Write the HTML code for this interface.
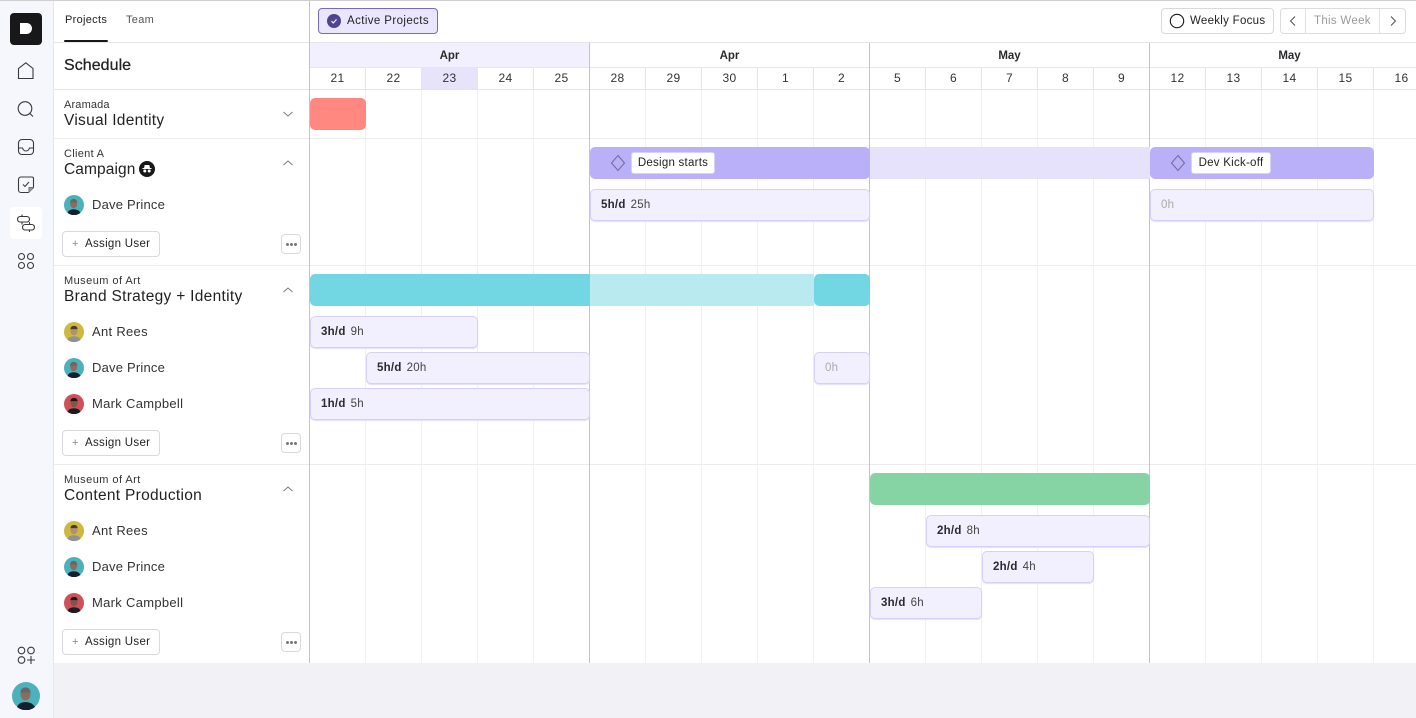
<!DOCTYPE html>
<html><head><meta charset="utf-8"><style>
html,body{margin:0;padding:0}
body{width:1416px;height:718px;overflow:hidden;background:#fff;position:relative;font-family:"Liberation Sans",sans-serif;color:#222}
div,span.a,svg.a{position:absolute}
.t{position:absolute;white-space:nowrap;line-height:16px;height:16px;margin-top:1px}
.h{left:0;height:1px;background:#ececef}
.v{width:1px;background:#f0f0f3;top:90px;height:573px}
.s{width:1px;background:#c4c4c6;top:43px;height:620px}
.dv{width:1px;background:#e5e5ea;top:68px;height:21px}
.d{top:70px;width:55px;text-align:center;font-size:12px;line-height:16px;color:#333;letter-spacing:.3px}
.m{top:48px;width:279px;text-align:center;font-size:11.5px;font-weight:bold;line-height:16px;color:#2a2a2e}
.c{left:64px;font-size:11px;letter-spacing:.3px;color:#333}
.mu{letter-spacing:.45px}
.n{left:64px;font-size:15.5px;letter-spacing:.25px;color:#222}
.u{left:92px;font-size:13px;letter-spacing:.3px;color:#333}
.dp{letter-spacing:.2px}
.b{height:32px;box-sizing:border-box;background:#f2f0fe;border:1px solid #d6d0f8;border-radius:5px;box-shadow:0 1px 1px #e2def8;font-size:11.5px;line-height:30px;padding-left:10px;color:#444;white-space:nowrap;letter-spacing:.25px}
.b b{color:#2a2a30;margin-right:5px}
.z{color:#aaa;padding-left:10px}
.as{left:62px;width:98px;height:26px;box-sizing:border-box;border:1px solid #d9d9dc;border-radius:4px;background:#fff;font-size:11.5px;line-height:24px;padding-left:22px;color:#222;letter-spacing:.3px;white-space:nowrap}
.as i{position:absolute;left:9px;top:0;font-style:normal;color:#888;font-size:11px}
.mo{left:281px;width:20px;height:20px;box-sizing:border-box;border:1px solid #d9d9dc;border-radius:4px;background:#fff}
.mo i{position:absolute;top:8px;width:3px;height:3px;border-radius:50%;background:#777}
.lab{height:22px;box-sizing:border-box;background:#fff;border:1px solid #d8d2fa;border-radius:3px;font-size:11.5px;line-height:21px;text-align:center;color:#222;letter-spacing:.25px;white-space:nowrap}
.ic{position:absolute;fill:none;stroke:#3a3a3e;stroke-width:1.1}
</style></head><body>
<div style="left:0;top:0;width:1416px;height:1px;background:#cfcfd2"></div>
<!-- sidebar -->
<div style="left:0;top:1px;width:53px;height:717px;background:#f5f7fc;border-right:1px solid #e6e6ec"></div>
<div style="left:10px;top:13px;width:32px;height:32px;background:#18181a;border-radius:4px"></div>
<svg class="a" style="left:10px;top:13px" width="32" height="32"><path d="M10 10h6.500a5.500 5.500 0 0 1 0 11H10z" fill="#fff"/></svg>
<svg class="ic" style="left:16px;top:60px" width="22" height="22"><path d="M2.500 18.500V8.500L9.800 2.800l7.200 5.700v10z"/></svg>
<svg class="ic" style="left:16px;top:98px" width="22" height="22"><circle cx="9" cy="10.500" r="6.800"/><path d="M14 15.500l3 3"/></svg>
<svg class="ic" style="left:16px;top:137px" width="22" height="22"><rect x="2.500" y="2.500" width="15" height="15" rx="3.500"/><path d="M2.500 11H6.500q1 3 3.500 3t3.500-3h4"/></svg>
<svg class="ic" style="left:16px;top:174px" width="22" height="22"><path d="M12.500 18.500H5a2.500 2.500 0 0 1-2.500-2.500V5.500A2.500 2.500 0 0 1 5 3h11a1.500 1.500 0 0 1 1.500 1.500V13.500z"/><path d="M7 10.500l2 2 4-4.500"/><path d="M13 18.500v-5h4.500" fill="#999" stroke="#777"/></svg>
<div style="left:10px;top:207px;width:32px;height:32px;background:#fff;border-radius:4px"></div>
<svg class="ic" style="left:15px;top:212px" width="24" height="24"><rect x="2.500" y="4.500" width="12" height="5.500" rx="2.700"/><rect x="7.500" y="12.500" width="12" height="5.500" rx="2.700"/><path d="M7 2.500v2M7 10v2.500M14.500 10v2.500M14.500 18v2"/></svg>
<svg class="ic" style="left:16px;top:251px" width="22" height="22"><circle cx="5.500" cy="5.500" r="3"/><circle cx="14.500" cy="5.500" r="3"/><circle cx="5.500" cy="14.500" r="3"/><circle cx="14.500" cy="14.500" r="3"/></svg>
<svg class="ic" style="left:16px;top:645px" width="22" height="22"><circle cx="5.500" cy="5.500" r="3.300"/><circle cx="15" cy="5.500" r="3.300"/><circle cx="5.500" cy="15" r="3.300"/><path d="M11 15h8M15 11v8"/></svg>
<svg class="a" style="left:12px;top:682px" width="28" height="28" viewBox="0 0 28 28"><circle cx="14" cy="14" r="14" fill="#4ab1bd"/><ellipse cx="13.500" cy="12" rx="5" ry="6.500" fill="#8a6d5c"/><path d="M13.500 5.500c-3 0-5 2-5 5h10c0-3-2-5-5-5z" fill="#6b6660"/><path d="M5 25q2-5 8.500-5t9.500 5a14 14 0 0 1-18 0z" fill="#15202e"/></svg>

<!-- bottom area -->
<div style="left:54px;top:663px;width:1362px;height:55px;background:#f1f1f6"></div>

<!-- lines -->
<div class="h" style="left:54px;top:42px;width:1362px;background:#e5e5e8"></div>
<div class="h" style="left:54px;top:89px;width:1362px;background:#e5e5e8"></div>
<div class="h" style="left:54px;top:138px;width:1362px"></div>
<div class="h" style="left:54px;top:265px;width:1362px"></div>
<div class="h" style="left:54px;top:464px;width:1362px"></div>
<div style="left:309px;top:1px;width:1px;height:662px;background:#c4c4c6"></div>

<!-- month band -->
<div style="left:310px;top:43px;width:279px;height:24px;background:#f2f0fe"></div>
<div class="h" style="left:310px;top:67px;width:1106px;background:#e5e5ea"></div>
<div style="left:422px;top:68px;width:55px;height:21px;background:#e6e3fb"></div>

<div class="v" style="left:365px"></div><div class="v" style="left:421px"></div><div class="v" style="left:477px"></div><div class="v" style="left:533px"></div>
<div class="v" style="left:645px"></div><div class="v" style="left:701px"></div><div class="v" style="left:757px"></div><div class="v" style="left:813px"></div>
<div class="v" style="left:925px"></div><div class="v" style="left:981px"></div><div class="v" style="left:1037px"></div><div class="v" style="left:1093px"></div>
<div class="v" style="left:1205px"></div><div class="v" style="left:1261px"></div><div class="v" style="left:1317px"></div><div class="v" style="left:1373px"></div>
<div class="dv" style="left:365px"></div><div class="dv" style="left:421px"></div><div class="dv" style="left:477px"></div><div class="dv" style="left:533px"></div>
<div class="dv" style="left:645px"></div><div class="dv" style="left:701px"></div><div class="dv" style="left:757px"></div><div class="dv" style="left:813px"></div>
<div class="dv" style="left:925px"></div><div class="dv" style="left:981px"></div><div class="dv" style="left:1037px"></div><div class="dv" style="left:1093px"></div>
<div class="dv" style="left:1205px"></div><div class="dv" style="left:1261px"></div><div class="dv" style="left:1317px"></div><div class="dv" style="left:1373px"></div>
<div class="s" style="left:589px"></div><div class="s" style="left:869px"></div><div class="s" style="left:1149px"></div>

<div class="m" style="left:310px">Apr</div><div class="m" style="left:590px">Apr</div><div class="m" style="left:870px">May</div><div class="m" style="left:1150px">May</div>
<div class="d" style="left:310px">21</div><div class="d" style="left:366px">22</div><div class="d" style="left:422px">23</div><div class="d" style="left:478px">24</div><div class="d" style="left:534px">25</div>
<div class="d" style="left:590px">28</div><div class="d" style="left:646px">29</div><div class="d" style="left:702px">30</div><div class="d" style="left:758px">1</div><div class="d" style="left:814px">2</div>
<div class="d" style="left:870px">5</div><div class="d" style="left:926px">6</div><div class="d" style="left:982px">7</div><div class="d" style="left:1038px">8</div><div class="d" style="left:1094px">9</div>
<div class="d" style="left:1150px">12</div><div class="d" style="left:1206px">13</div><div class="d" style="left:1262px">14</div><div class="d" style="left:1318px">15</div><div class="d" style="left:1374px">16</div>

<!-- tabs -->
<div class="t" style="left:65px;top:11px;font-size:11px;letter-spacing:.3px;color:#222">Projects</div>
<div class="t" style="left:126px;top:11px;font-size:11px;letter-spacing:.3px;color:#555">Team</div>
<div style="left:64px;top:40px;width:44px;height:2px;background:#18181a;border-radius:1px"></div>
<div class="t" style="left:64px;top:57px;font-size:16px;letter-spacing:.05px;color:#222;-webkit-text-stroke:.25px #222">Schedule</div>

<!-- toolbar -->
<div style="left:318px;top:8px;width:120px;height:26px;box-sizing:border-box;background:#e9e6fd;border:1px solid #7a68c8;border-radius:4px"></div>
<svg class="a" style="left:327px;top:14px" width="14" height="14"><circle cx="7" cy="7" r="7" fill="#51438f"/><path d="M4.500 7.200l1.800 1.800 3.200-3.600" fill="none" stroke="#fff" stroke-width="1.100"/></svg>
<div class="t" style="left:347px;top:12px;font-size:11.500px;letter-spacing:.4px;color:#222">Active Projects</div>

<div style="left:1161px;top:8px;width:113px;height:26px;box-sizing:border-box;border:1px solid #d9d9dc;border-radius:4px;background:#fff"></div>
<svg class="a" style="left:1169px;top:13px" width="16" height="16"><circle cx="8" cy="8" r="6.700" fill="none" stroke="#18181a" stroke-width="1.100"/></svg>
<div class="t" style="left:1190px;top:12px;font-size:11.500px;letter-spacing:.28px;color:#222">Weekly Focus</div>
<div style="left:1280px;top:8px;width:126px;height:26px;box-sizing:border-box;border:1px solid #dcdcdf;border-radius:4px;background:#fff"></div>
<div style="left:1305px;top:9px;width:1px;height:24px;background:#e2e2e5"></div>
<div style="left:1379px;top:9px;width:1px;height:24px;background:#e2e2e5"></div>
<svg class="a" style="left:1287px;top:15px" width="12" height="12"><path d="M8 1.500L3.500 6 8 10.500" fill="none" stroke="#444" stroke-width=".9"/></svg>
<svg class="a" style="left:1387px;top:15px" width="12" height="12"><path d="M4 1.500L8.500 6 4 10.500" fill="none" stroke="#444" stroke-width=".9"/></svg>
<div class="t" style="left:1314px;top:12px;font-size:11.500px;letter-spacing:.3px;color:#9a9a9e">This Week</div>

<!-- left rows -->
<div class="t c" style="top:96px;letter-spacing:.15px">Aramada</div><div class="t n" style="top:112px;letter-spacing:.28px">Visual Identity</div>
<svg class="a" style="left:282px;top:108px" width="12" height="12"><path d="M1.500 4L6 8l4.500-4" fill="none" stroke="#777" stroke-width=".9"/></svg>

<div class="t c" style="top:145px">Client A</div><div class="t n" style="top:161px;letter-spacing:.1px">Campaign</div>
<svg class="a" style="left:139px;top:161px" width="16" height="16"><circle cx="8" cy="8" r="8" fill="#18181a"/><path d="M3.500 7.500h9M5.500 7l.6-2.500h3.800l.6 2.500" fill="#fff" stroke="#fff"/><circle cx="5.800" cy="10" r="1.500" fill="#fff"/><circle cx="10.200" cy="10" r="1.500" fill="#fff"/></svg>
<svg class="a" style="left:282px;top:157px" width="12" height="12"><path d="M1.500 8L6 4l4.500 4" fill="none" stroke="#777" stroke-width=".9"/></svg>
<svg class="a" style="left:64px;top:195px" width="20" height="20" viewBox="0 0 28 28"><circle cx="14" cy="14" r="14" fill="#4ab1bd"/><ellipse cx="13.500" cy="12" rx="5" ry="6.500" fill="#8a6d5c"/><path d="M13.500 5.500c-3 0-5 2-5 5h10c0-3-2-5-5-5z" fill="#6b6660"/><path d="M5 25q2-5 8.500-5t9.500 5a14 14 0 0 1-18 0z" fill="#15202e"/></svg>
<div class="t u dp" style="top:196px">Dave Prince</div>
<div class="as" style="top:231px"><i>+</i>Assign User</div>
<div class="mo" style="top:234px"><i style="left:4px"></i><i style="left:8px"></i><i style="left:12px"></i></div>

<div class="t c mu" style="top:272px">Museum of Art</div><div class="t n" style="top:288px;letter-spacing:.3px">Brand Strategy + Identity</div>
<svg class="a" style="left:282px;top:284px" width="12" height="12"><path d="M1.500 8L6 4l4.500 4" fill="none" stroke="#777" stroke-width=".9"/></svg>
<svg class="a" style="left:64px;top:322px" width="20" height="20" viewBox="0 0 28 28"><circle cx="14" cy="14" r="14" fill="#cdb93e"/><ellipse cx="14" cy="12" rx="5" ry="6.500" fill="#b08f74"/><path d="M14 5.500c-3 0-5 2-5 4.500h10c0-2.500-2-4.500-5-4.500z" fill="#4a3a2c"/><path d="M5 25q2-5 9-5t9 5a14 14 0 0 1-18 0z" fill="#8d9296"/></svg>
<div class="t u" style="top:323px">Ant Rees</div>
<svg class="a" style="left:64px;top:358px" width="20" height="20" viewBox="0 0 28 28"><circle cx="14" cy="14" r="14" fill="#4ab1bd"/><ellipse cx="13.500" cy="12" rx="5" ry="6.500" fill="#8a6d5c"/><path d="M13.500 5.500c-3 0-5 2-5 5h10c0-3-2-5-5-5z" fill="#6b6660"/><path d="M5 25q2-5 8.500-5t9.500 5a14 14 0 0 1-18 0z" fill="#15202e"/></svg>
<div class="t u dp" style="top:359px">Dave Prince</div>
<svg class="a" style="left:64px;top:394px" width="20" height="20" viewBox="0 0 28 28"><circle cx="14" cy="14" r="14" fill="#cf5058"/><ellipse cx="14" cy="12" rx="5" ry="6.500" fill="#7d5848"/><path d="M14 5.500c-3 0-5 2-5 4.500h10c0-2.500-2-4.500-5-4.500z" fill="#1c1614"/><path d="M5 25q2-5 9-5t9 5a14 14 0 0 1-18 0z" fill="#1c1c22"/></svg>
<div class="t u" style="top:395px">Mark Campbell</div>
<div class="as" style="top:430px"><i>+</i>Assign User</div>
<div class="mo" style="top:433px"><i style="left:4px"></i><i style="left:8px"></i><i style="left:12px"></i></div>

<div class="t c mu" style="top:471px">Museum of Art</div><div class="t n" style="top:487px;letter-spacing:.3px">Content Production</div>
<svg class="a" style="left:282px;top:483px" width="12" height="12"><path d="M1.500 8L6 4l4.500 4" fill="none" stroke="#777" stroke-width=".9"/></svg>
<svg class="a" style="left:64px;top:521px" width="20" height="20" viewBox="0 0 28 28"><circle cx="14" cy="14" r="14" fill="#cdb93e"/><ellipse cx="14" cy="12" rx="5" ry="6.500" fill="#b08f74"/><path d="M14 5.500c-3 0-5 2-5 4.500h10c0-2.500-2-4.500-5-4.500z" fill="#4a3a2c"/><path d="M5 25q2-5 9-5t9 5a14 14 0 0 1-18 0z" fill="#8d9296"/></svg>
<div class="t u" style="top:522px">Ant Rees</div>
<svg class="a" style="left:64px;top:557px" width="20" height="20" viewBox="0 0 28 28"><circle cx="14" cy="14" r="14" fill="#4ab1bd"/><ellipse cx="13.500" cy="12" rx="5" ry="6.500" fill="#8a6d5c"/><path d="M13.500 5.500c-3 0-5 2-5 5h10c0-3-2-5-5-5z" fill="#6b6660"/><path d="M5 25q2-5 8.500-5t9.500 5a14 14 0 0 1-18 0z" fill="#15202e"/></svg>
<div class="t u dp" style="top:558px">Dave Prince</div>
<svg class="a" style="left:64px;top:593px" width="20" height="20" viewBox="0 0 28 28"><circle cx="14" cy="14" r="14" fill="#cf5058"/><ellipse cx="14" cy="12" rx="5" ry="6.500" fill="#7d5848"/><path d="M14 5.500c-3 0-5 2-5 4.500h10c0-2.500-2-4.500-5-4.500z" fill="#1c1614"/><path d="M5 25q2-5 9-5t9 5a14 14 0 0 1-18 0z" fill="#1c1c22"/></svg>
<div class="t u" style="top:594px">Mark Campbell</div>
<div class="as" style="top:629px"><i>+</i>Assign User</div>
<div class="mo" style="top:632px"><i style="left:4px"></i><i style="left:8px"></i><i style="left:12px"></i></div>

<!-- bars -->
<div style="left:310px;top:98px;width:56px;height:32px;background:#ff8880;border-radius:5px"></div>

<div style="left:870px;top:147px;width:280px;height:32px;background:#e7e2fc"></div>
<div style="left:590px;top:147px;width:280px;height:32px;background:#bab0f8;border-radius:5px"></div>
<div style="left:1150px;top:147px;width:224px;height:32px;background:#bab0f8;border-radius:5px"></div>
<svg class="a" style="left:610px;top:153px" width="16" height="20"><path d="M8 2.500L14.500 10 8 17.500 1.500 10z" fill="none" stroke="#6f6a96" stroke-width="1"/></svg>
<svg class="a" style="left:1170px;top:153px" width="16" height="20"><path d="M8 2.500L14.500 10 8 17.500 1.500 10z" fill="none" stroke="#6f6a96" stroke-width="1"/></svg>
<div class="lab" style="left:631px;top:152px;width:84px">Design starts</div>
<div class="lab" style="left:1191px;top:152px;width:80px">Dev Kick-off</div>

<div class="b" style="left:590px;top:189px;width:280px"><b>5h/d</b>25h</div>
<div class="b z" style="left:1150px;top:189px;width:224px">0h</div>

<div style="left:590px;top:274px;width:224px;height:32px;background:#b9eaf0"></div>
<div style="left:310px;top:274px;width:280px;height:32px;background:#72d7e3;border-radius:5px 0 0 5px"></div>
<div style="left:814px;top:274px;width:56px;height:32px;background:#72d7e3;border-radius:5px"></div>

<div class="b" style="left:310px;top:316px;width:168px"><b>3h/d</b>9h</div>
<div class="b" style="left:366px;top:352px;width:224px"><b>5h/d</b>20h</div>
<div class="b z" style="left:814px;top:352px;width:56px">0h</div>
<div class="b" style="left:310px;top:388px;width:280px"><b>1h/d</b>5h</div>

<div style="left:870px;top:473px;width:280px;height:32px;background:#86d4a4;border-radius:5px"></div>
<div class="b" style="left:926px;top:515px;width:224px"><b>2h/d</b>8h</div>
<div class="b" style="left:982px;top:551px;width:112px"><b>2h/d</b>4h</div>
<div class="b" style="left:870px;top:587px;width:112px"><b>3h/d</b>6h</div>
</body></html>
